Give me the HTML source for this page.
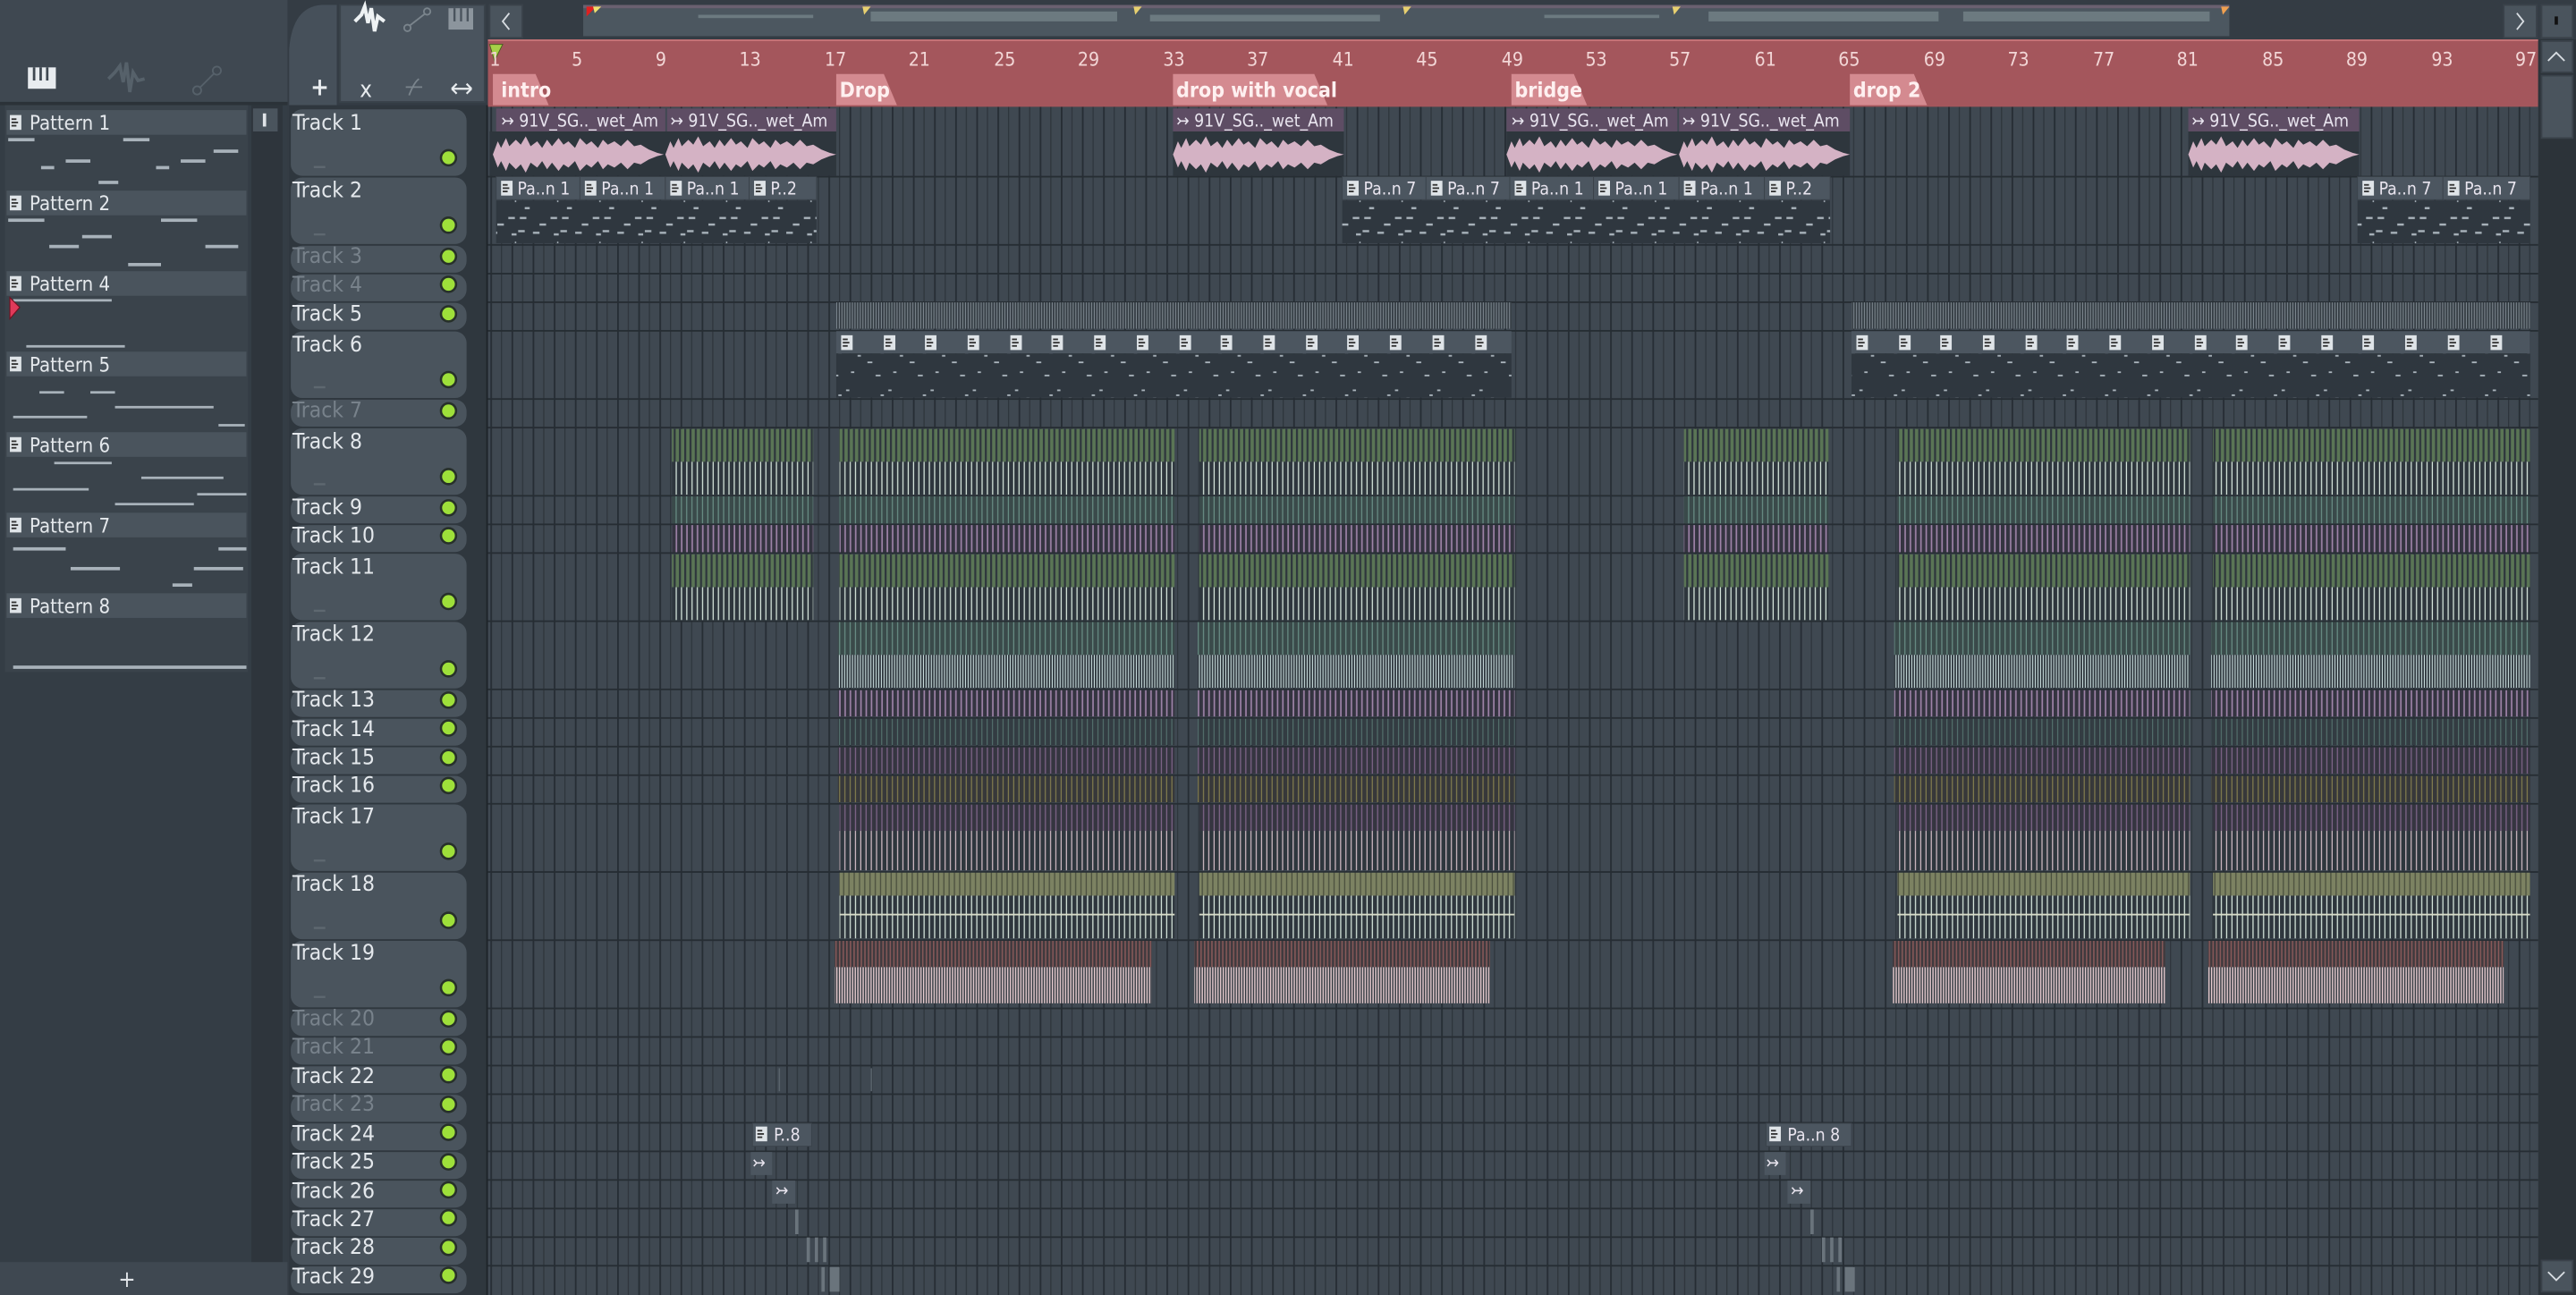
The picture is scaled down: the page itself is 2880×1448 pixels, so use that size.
<!DOCTYPE html>
<html><head><meta charset="utf-8"><style>
html,body{margin:0;padding:0;background:#343c44;overflow:hidden}
svg{display:block}
text{font-family:"DejaVu Sans Condensed","Liberation Sans Narrow","Liberation Sans",sans-serif}
.tl{font-size:13.3px;fill:#e4e8ec}
.td{font-size:13.3px;fill:#78828b}
.pl{font-size:12px;fill:#e4e8ec}
.cl{font-size:10.5px;fill:#e8e4ee}
.rn{font-size:11.5px;fill:#f2d6d6}
.mk{font-size:12.5px;fill:#fff0f0;font-weight:bold}
</style></head><body>
<svg width="2880" height="1448" viewBox="0 0 1568 788" preserveAspectRatio="none" xmlns="http://www.w3.org/2000/svg">
<defs>
<pattern id="grid" x="298.5" y="0" width="12.86" height="10" patternUnits="userSpaceOnUse">
<rect width="12.86" height="10" fill="#3f4851"/>
<rect x="0" width="1" height="10" fill="#262d34"/>
<rect x="6.43" width="0.7" height="10" fill="#2e353c"/>
</pattern>
<pattern id="grn" x="0" y="0" width="3.21" height="10" patternUnits="userSpaceOnUse"><rect width="3.21" height="10" fill="#2e363d"/><rect x="0.4" width="2" height="10" fill="#5a7555"/></pattern>
<pattern id="wsp" x="0" y="0" width="3.21" height="10" patternUnits="userSpaceOnUse"><rect width="3.21" height="10" fill="#2e363d"/><rect x="0.4" width="0.7" height="10" fill="#d6e6dc"/></pattern>
<pattern id="tea" x="0" y="0" width="3.21" height="10" patternUnits="userSpaceOnUse"><rect width="3.21" height="10" fill="#3a4a4a"/><rect x="0.4" width="0.6" height="10" fill="#6e968c"/></pattern>
<pattern id="pur" x="0" y="0" width="3.21" height="10" patternUnits="userSpaceOnUse"><rect width="3.21" height="10" fill="#343440"/><rect x="0.4" width="0.9" height="10" fill="#a084aa"/></pattern>
<pattern id="wdn" x="0" y="0" width="1.6" height="10" patternUnits="userSpaceOnUse"><rect width="1.6" height="10" fill="#2e363d"/><rect x="0.2" width="0.6" height="10" fill="#c8dcdc"/></pattern>
<pattern id="tth" x="0" y="0" width="3.21" height="10" patternUnits="userSpaceOnUse"><rect width="3.21" height="10" fill="#333c42"/><rect x="0.4" width="0.5" height="10" fill="#5c7e78"/></pattern>
<pattern id="pth" x="0" y="0" width="3.21" height="10" patternUnits="userSpaceOnUse"><rect width="3.21" height="10" fill="#353540"/><rect x="0.4" width="0.7" height="10" fill="#7e6488"/></pattern>
<pattern id="olv" x="0" y="0" width="3.21" height="10" patternUnits="userSpaceOnUse"><rect width="3.21" height="10" fill="#37383a"/><rect x="0.4" width="0.6" height="10" fill="#8a8450"/></pattern>
<pattern id="ol2" x="0" y="0" width="3.21" height="10" patternUnits="userSpaceOnUse"><rect width="3.21" height="10" fill="#4a4f3e"/><rect x="0.3" width="2.5" height="10" fill="#7c8262"/></pattern>
<pattern id="pkl" x="0" y="0" width="3.21" height="10" patternUnits="userSpaceOnUse"><rect width="3.21" height="10" fill="#2e363d"/><rect x="0.4" width="0.6" height="10" fill="#e6ccd6"/></pattern>
<pattern id="red" x="0" y="0" width="2.2" height="10" patternUnits="userSpaceOnUse"><rect width="2.2" height="10" fill="#3f3a3e"/><rect x="0.3" width="0.8" height="10" fill="#8a5a5a"/></pattern>
<pattern id="pnk" x="0" y="0" width="1.6" height="10" patternUnits="userSpaceOnUse"><rect width="1.6" height="10" fill="#2e363d"/><rect x="0.2" width="0.8" height="10" fill="#e8ccd0"/></pattern>
<pattern id="gry" x="0" y="0" width="1.6" height="10" patternUnits="userSpaceOnUse"><rect width="1.6" height="10" fill="#343c43"/><rect x="0.2" width="0.5" height="10" fill="#8c969e"/></pattern>
<pattern id="dots" x="0" y="0" width="25.7" height="26" patternUnits="userSpaceOnUse">
<rect width="25.7" height="26" fill="#2f373f"/>
<rect x="1" y="2" width="4" height="1.3" fill="#aab4bc"/><rect x="8" y="2" width="4" height="1.3" fill="#aab4bc"/><rect x="20" y="6" width="4" height="1.3" fill="#aab4bc"/>
<rect x="3" y="12" width="3" height="1.3" fill="#aab4bc"/><rect x="7" y="10" width="4" height="1.3" fill="#aab4bc"/><rect x="16" y="11" width="4" height="1.3" fill="#aab4bc"/>
<rect x="5" y="17" width="0.8" height="2" fill="#aab4bc"/><rect x="11" y="22" width="3" height="1.3" fill="#aab4bc"/></pattern>
<pattern id="dots2" x="0" y="0" width="25.7" height="26" patternUnits="userSpaceOnUse">
<rect width="25.7" height="26" fill="#2f373f"/>
<rect x="1" y="3" width="2" height="1" fill="#aab4bc"/><rect x="8" y="8" width="2" height="1" fill="#aab4bc"/><rect x="14" y="12" width="3" height="1" fill="#aab4bc"/><rect x="4" y="18" width="2" height="1" fill="#aab4bc"/><rect x="19" y="20" width="3" height="1" fill="#aab4bc"/><rect x="22" y="6" width="2" height="1" fill="#aab4bc"/></pattern>
<g id="pic"><rect width="7" height="9" fill="#dfe4e8"/><rect x="1" y="2" width="3" height="1" fill="#333"/><rect x="1" y="4" width="4" height="1" fill="#333"/><rect x="1" y="6" width="3" height="1" fill="#333"/></g>
<polygon id="wv" fill="#d4b2c4" points="0,94 3,86 5,90 8,84 10,89 14,85 17,88 20,83 23,89 27,86 30,90 33,85 36,89 40,84 43,88 46,86 50,90 53,84 57,88 60,86 64,90 67,85 70,88 74,86 78,89 82,85 86,89 90,88 95,91 100,93 104,94 100,95 95,97 90,100 86,99 82,103 78,99 74,102 70,100 67,103 64,98 60,102 57,100 53,104 50,98 46,102 43,100 40,104 36,99 33,103 30,98 27,102 23,99 20,105 17,100 14,103 10,99 8,104 5,98 3,102"/>
</defs>

<rect width="1568" height="788" fill="#343c44"/>
<!-- left panel -->
<rect x="0" y="0" width="175" height="788" fill="#343d45"/>
<rect x="0" y="0" width="175" height="62" fill="#3f4851"/>
<rect x="0" y="62" width="175" height="2" fill="#2b3238"/>
<g fill="#e8ecef"><rect x="17" y="41" width="17" height="13"/></g>
<g fill="#3f4851"><rect x="20" y="41" width="1.5" height="8"/><rect x="24" y="41" width="1.5" height="8"/><rect x="28" y="41" width="1.5" height="8"/></g>
<path d="M66 48 L70 44 L73 40 L75 50 L77 38 L79 56 L81 44 L84 49 L88 48" stroke="#56616a" stroke-width="2" fill="none"/>
<circle cx="120" cy="55" r="2.5" fill="none" stroke="#56616a"/><circle cx="132" cy="43" r="2.5" fill="none" stroke="#56616a"/><path d="M122 53 L130 45" stroke="#56616a"/>
<rect x="153" y="64" width="19" height="704" fill="#2e353c"/>
<rect x="154" y="66" width="15" height="14" fill="#4a545d"/><rect x="160" y="69" width="2" height="8" fill="#e0e4e8"/>
<rect x="3" y="64" width="148" height="345" fill="#3a434b"/>
<g>
<rect x="4" y="67" width="146" height="15" fill="#4a545d"/><use href="#pic" x="6" y="70"/><text class="pl" x="18" y="79">Pattern 1</text>
<rect x="4" y="116" width="146" height="15" fill="#4a545d"/><use href="#pic" x="6" y="119"/><text class="pl" x="18" y="128">Pattern 2</text>
<rect x="4" y="165" width="146" height="15" fill="#4a545d"/><use href="#pic" x="6" y="168"/><text class="pl" x="18" y="177">Pattern 4</text>
<rect x="4" y="214" width="146" height="15" fill="#4a545d"/><use href="#pic" x="6" y="217"/><text class="pl" x="18" y="226">Pattern 5</text>
<rect x="4" y="263" width="146" height="15" fill="#4a545d"/><use href="#pic" x="6" y="266"/><text class="pl" x="18" y="275">Pattern 6</text>
<rect x="4" y="312" width="146" height="15" fill="#4a545d"/><use href="#pic" x="6" y="315"/><text class="pl" x="18" y="324">Pattern 7</text>
<rect x="4" y="361" width="146" height="15" fill="#4a545d"/><use href="#pic" x="6" y="364"/><text class="pl" x="18" y="373">Pattern 8</text>
</g>
<g fill="#a8b2ba">
<rect x="5" y="84" width="16" height="2"/><rect x="75" y="84" width="16" height="2"/><rect x="130" y="91" width="15" height="2"/><rect x="25" y="101" width="8" height="2"/><rect x="40" y="97" width="15" height="2"/><rect x="95" y="101" width="8" height="2"/><rect x="110" y="97" width="15" height="2"/><rect x="60" y="110" width="12" height="2"/>
<rect x="5" y="133" width="22" height="2"/><rect x="98" y="133" width="22" height="2"/><rect x="30" y="149" width="18" height="2"/><rect x="50" y="143" width="18" height="2"/><rect x="125" y="149" width="20" height="2"/><rect x="78" y="160" width="20" height="2"/>
<rect x="8" y="182" width="60" height="1.5"/><rect x="16" y="210" width="60" height="1.5"/>
<rect x="24" y="238" width="15" height="1.5"/><rect x="55" y="238" width="15" height="1.5"/><rect x="70" y="247" width="60" height="1.5"/><rect x="8" y="253" width="45" height="1.5"/><rect x="133" y="258" width="16" height="1.5"/>
<rect x="33" y="281" width="35" height="1.5"/><rect x="86" y="290" width="50" height="1.5"/><rect x="8" y="297" width="46" height="1.5"/><rect x="70" y="306" width="48" height="1.5"/><rect x="120" y="300" width="30" height="1.5"/>
<rect x="8" y="333" width="32" height="2"/><rect x="133" y="333" width="17" height="2"/><rect x="43" y="345" width="30" height="2"/><rect x="118" y="345" width="30" height="2"/><rect x="105" y="355" width="12" height="2"/>
<rect x="8" y="405" width="142" height="2"/>
</g>
<path d="M6 181 L12 187 L6 194 Z" fill="#e03a5a" stroke="#701020" stroke-width="0.6"/>
<rect x="0" y="768" width="175" height="20" fill="#3f4851"/>
<text x="72" y="783" font-size="14" fill="#e0e4e8" font-family="Liberation Sans">+</text>

<!-- tool column -->
<path d="M176 64 L176 30 Q178 4 196 3 L205 3 L205 64 Z" fill="#46505a"/>
<rect x="207" y="3" width="88" height="59" fill="#4a545e" stroke="#3a434b"/>
<text x="189" y="58" font-size="15" fill="#e8ecef" font-family="Liberation Sans" font-weight="bold">+</text>
<path d="M216 13 L220 9 L222 4 L224 14 L226 5 L228 19 L230 10 L234 13" stroke="#eef2f4" stroke-width="2.2" fill="none"/>
<circle cx="248" cy="17" r="2" fill="none" stroke="#7a848c"/><circle cx="260" cy="7" r="2" fill="none" stroke="#7a848c"/><path d="M249.5 15.5 L258.5 8.5" stroke="#7a848c"/>
<rect x="273" y="5" width="15" height="13" fill="#8c959d"/><rect x="276" y="5" width="1.3" height="8" fill="#4a545e"/><rect x="280" y="5" width="1.3" height="8" fill="#4a545e"/><rect x="284" y="5" width="1.3" height="8" fill="#4a545e"/>
<text x="219" y="59" font-size="14" fill="#e8ecef" font-family="Liberation Sans">x</text>
<path d="M249 58 Q252 50 255 48 M247 53 L257 53" stroke="#7a848c" fill="none"/>
<path d="M275 54 L287 54 M275 54 L278 51 M275 54 L278 57 M287 54 L284 51 M287 54 L284 57" stroke="#e8ecef" fill="none" stroke-width="1.2"/>

<!-- top bar -->
<rect x="297" y="0" width="1271" height="25" fill="#343c44"/>
<rect x="298" y="3" width="20" height="20" fill="#4a545d" stroke="#3a424a"/>
<path d="M310 8 L306 13 L310 18" stroke="#d8dde2" fill="none"/>
<rect x="355" y="4" width="1002" height="18" fill="#4c5760"/>
<rect x="355" y="3" width="1002" height="2" fill="#6a6070"/>
<path d="M357 4 L363 4 L357 10Z" fill="#e02020"/><path d="M361 4 L366 4 L362 8Z" fill="#f0e070"/>
<g fill="#e8d070"><path d="M525 4 L530 4 L526 9Z"/><path d="M690 4 L695 4 L691 9Z"/><path d="M854 4 L859 4 L855 9Z"/><path d="M1018 4 L1023 4 L1019 9Z"/><path d="M1352 4 L1357 4 L1353 9Z" fill="#f0a050"/></g>
<g fill="#6c7a80"><rect x="425" y="9" width="70" height="2"/><rect x="530" y="7" width="150" height="6"/><rect x="700" y="9" width="140" height="4"/><rect x="940" y="9" width="70" height="2"/><rect x="1040" y="7" width="140" height="6"/><rect x="1195" y="7" width="150" height="6"/></g>
<rect x="1524" y="3" width="20" height="20" fill="#4a545d" stroke="#3a424a"/>
<path d="M1532 8 L1536 13 L1532 18" stroke="#d8dde2" fill="none"/>
<rect x="1547" y="3" width="19" height="20" fill="#4a545d" stroke="#3a424a"/><rect x="1555" y="10" width="2" height="5" fill="#111"/>

<!-- ruler -->
<rect x="297" y="24" width="1248" height="41" fill="#a4565c"/>
<rect x="297" y="24" width="1248" height="1" fill="#c77478"/>
<path d="M298 27 L306 27 L301 37 Z" fill="#a6d048" stroke="#4a6020" stroke-width="0.5"/>
<g>
<text class="rn" x="298" y="40">1</text><text class="rn" x="348" y="40">5</text><text class="rn" x="399" y="40">9</text><text class="rn" x="450" y="40">13</text><text class="rn" x="502" y="40">17</text><text class="rn" x="553" y="40">21</text><text class="rn" x="605" y="40">25</text><text class="rn" x="656" y="40">29</text><text class="rn" x="708" y="40">33</text><text class="rn" x="759" y="40">37</text><text class="rn" x="811" y="40">41</text><text class="rn" x="862" y="40">45</text><text class="rn" x="914" y="40">49</text><text class="rn" x="965" y="40">53</text><text class="rn" x="1016" y="40">57</text><text class="rn" x="1068" y="40">61</text><text class="rn" x="1119" y="40">65</text><text class="rn" x="1171" y="40">69</text><text class="rn" x="1222" y="40">73</text><text class="rn" x="1274" y="40">77</text><text class="rn" x="1325" y="40">81</text><text class="rn" x="1377" y="40">85</text><text class="rn" x="1428" y="40">89</text><text class="rn" x="1480" y="40">93</text><text class="rn" x="1531" y="40">97</text>
</g>
<g fill="#d48a90">
<path d="M300 45 L326 45 L334 64 L300 64Z"/><path d="M509 45 L538 45 L546 64 L509 64Z"/><path d="M714 45 L800 45 L808 64 L714 64Z"/><path d="M920 45 L958 45 L966 64 L920 64Z"/><path d="M1126 45 L1165 45 L1173 64 L1126 64Z"/>
</g>
<text class="mk" x="305" y="59">intro</text><text class="mk" x="511" y="59">Drop</text><text class="mk" x="716" y="59">drop with vocal</text><text class="mk" x="922" y="59">bridge</text><text class="mk" x="1128" y="59">drop 2</text>

<!-- right scrollbar -->
<rect x="1545" y="24" width="23" height="764" fill="#2c3339"/>
<rect x="1547" y="25" width="19" height="19" fill="#4a545d" stroke="#3a424a"/><path d="M1551 37 L1556 32 L1561 37" stroke="#d8dde2" fill="none"/>
<rect x="1547" y="46" width="19" height="38" fill="#4a545d" stroke="#3a424a"/>
<rect x="1547" y="767" width="19" height="19" fill="#4a545d" stroke="#3a424a"/><path d="M1551 774 L1556 779 L1561 774" stroke="#d8dde2" fill="none"/>

<!-- grid -->
<rect x="297" y="65" width="1248" height="723" fill="url(#grid)"/>
<rect x="286" y="64" width="11" height="724" fill="#2f373e"/>
<rect x="296" y="64" width="1" height="724" fill="#1e2429"/>
<g fill="#262d33">
<rect x="297" y="107" width="1248" height="1"/><rect x="297" y="148.5" width="1248" height="1"/><rect x="297" y="166" width="1248" height="1"/><rect x="297" y="183.4" width="1248" height="1"/><rect x="297" y="200.8" width="1248" height="1"/><rect x="297" y="242.3" width="1248" height="1"/><rect x="297" y="259.7" width="1248" height="1"/><rect x="297" y="301.2" width="1248" height="1"/><rect x="297" y="318.6" width="1248" height="1"/><rect x="297" y="336" width="1248" height="1"/><rect x="297" y="377.5" width="1248" height="1"/><rect x="297" y="419" width="1248" height="1"/><rect x="297" y="436.4" width="1248" height="1"/><rect x="297" y="453.8" width="1248" height="1"/><rect x="297" y="471.2" width="1248" height="1"/><rect x="297" y="488.6" width="1248" height="1"/><rect x="297" y="530.1" width="1248" height="1"/><rect x="297" y="571.6" width="1248" height="1"/><rect x="297" y="613.1" width="1248" height="1"/><rect x="297" y="630.5" width="1248" height="1"/><rect x="297" y="647.9" width="1248" height="1"/><rect x="297" y="665.3" width="1248" height="1"/><rect x="297" y="682.7" width="1248" height="1"/><rect x="297" y="700.1" width="1248" height="1"/><rect x="297" y="717.5" width="1248" height="1"/><rect x="297" y="734.9" width="1248" height="1"/><rect x="297" y="752.3" width="1248" height="1"/><rect x="297" y="769.7" width="1248" height="1"/>
</g>

<!-- track headers -->
<rect x="176" y="64" width="110" height="724" fill="#2f373e"/>
<g fill="#4a545d">
<rect x="177" y="66.5" width="107" height="40.5" rx="7"/><rect x="177" y="108" width="107" height="40.5" rx="7"/><rect x="177" y="149.5" width="107" height="16.4" rx="7"/><rect x="177" y="166.9" width="107" height="16.4" rx="7"/><rect x="177" y="184.3" width="107" height="16.4" rx="7"/><rect x="177" y="201.7" width="107" height="40.5" rx="7"/><rect x="177" y="243.2" width="107" height="16.4" rx="7"/><rect x="177" y="260.6" width="107" height="40.5" rx="7"/><rect x="177" y="302.1" width="107" height="16.4" rx="7"/><rect x="177" y="319.5" width="107" height="16.4" rx="7"/><rect x="177" y="336.9" width="107" height="40.5" rx="7"/><rect x="177" y="378.4" width="107" height="40.5" rx="7"/><rect x="177" y="419.9" width="107" height="16.4" rx="7"/><rect x="177" y="437.3" width="107" height="16.4" rx="7"/><rect x="177" y="454.7" width="107" height="16.4" rx="7"/><rect x="177" y="472.1" width="107" height="16.4" rx="7"/><rect x="177" y="489.5" width="107" height="40.5" rx="7"/><rect x="177" y="531" width="107" height="40.5" rx="7"/><rect x="177" y="572.5" width="107" height="40.5" rx="7"/><rect x="177" y="614" width="107" height="16.4" rx="7"/><rect x="177" y="631.4" width="107" height="16.4" rx="7"/><rect x="177" y="648.8" width="107" height="16.4" rx="7"/><rect x="177" y="666.2" width="107" height="16.4" rx="7"/><rect x="177" y="683.6" width="107" height="16.4" rx="7"/><rect x="177" y="701" width="107" height="16.4" rx="7"/><rect x="177" y="718.4" width="107" height="16.4" rx="7"/><rect x="177" y="735.8" width="107" height="16.4" rx="7"/><rect x="177" y="753.2" width="107" height="16.4" rx="7"/><rect x="177" y="770.6" width="107" height="16.4" rx="7"/>
</g>
<text class="tl" x="178" y="79">Track 1</text><text class="tl" x="178" y="120">Track 2</text><text class="td" x="178" y="160">Track 3</text><text class="td" x="178" y="177.5">Track 4</text><text class="tl" x="178" y="195">Track 5</text><text class="tl" x="178" y="214">Track 6</text><text class="td" x="178" y="254">Track 7</text><text class="tl" x="178" y="273">Track 8</text><text class="tl" x="178" y="313">Track 9</text><text class="tl" x="178" y="330">Track 10</text><text class="tl" x="178" y="349">Track 11</text><text class="tl" x="178" y="390">Track 12</text><text class="tl" x="178" y="430">Track 13</text><text class="tl" x="178" y="448">Track 14</text><text class="tl" x="178" y="465">Track 15</text><text class="tl" x="178" y="482">Track 16</text><text class="tl" x="178" y="501">Track 17</text><text class="tl" x="178" y="542">Track 18</text><text class="tl" x="178" y="584">Track 19</text><text class="td" x="178" y="624">Track 20</text><text class="td" x="178" y="641">Track 21</text><text class="tl" x="178" y="659">Track 22</text><text class="td" x="178" y="676">Track 23</text><text class="tl" x="178" y="694">Track 24</text><text class="tl" x="178" y="711">Track 25</text><text class="tl" x="178" y="729">Track 26</text><text class="tl" x="178" y="746">Track 27</text><text class="tl" x="178" y="763">Track 28</text><text class="tl" x="178" y="781">Track 29</text>
<g fill="#5e6870"><rect x="191" y="101" width="7" height="1.3"/><rect x="191" y="142" width="7" height="1.3"/><rect x="191" y="235" width="7" height="1.3"/><rect x="191" y="294" width="7" height="1.3"/><rect x="191" y="371" width="7" height="1.3"/><rect x="191" y="412" width="7" height="1.3"/><rect x="191" y="523" width="7" height="1.3"/><rect x="191" y="564" width="7" height="1.3"/><rect x="191" y="606" width="7" height="1.3"/></g>
<g fill="#9ee03a" stroke="#27302a" stroke-width="1.4">
<circle cx="273" cy="96" r="4.6"/><circle cx="273" cy="137" r="4.6"/><circle cx="273" cy="156" r="4.6"/><circle cx="273" cy="173" r="4.6"/><circle cx="273" cy="191" r="4.6"/><circle cx="273" cy="231" r="4.6"/><circle cx="273" cy="250" r="4.6"/><circle cx="273" cy="290" r="4.6"/><circle cx="273" cy="309" r="4.6"/><circle cx="273" cy="326" r="4.6"/><circle cx="273" cy="366" r="4.6"/><circle cx="273" cy="407" r="4.6"/><circle cx="273" cy="426" r="4.6"/><circle cx="273" cy="443" r="4.6"/><circle cx="273" cy="461" r="4.6"/><circle cx="273" cy="478" r="4.6"/><circle cx="273" cy="518" r="4.6"/><circle cx="273" cy="560" r="4.6"/><circle cx="273" cy="601" r="4.6"/><circle cx="273" cy="620" r="4.6"/><circle cx="273" cy="637" r="4.6"/><circle cx="273" cy="654" r="4.6"/><circle cx="273" cy="672" r="4.6"/><circle cx="273" cy="689" r="4.6"/><circle cx="273" cy="707" r="4.6"/><circle cx="273" cy="724" r="4.6"/><circle cx="273" cy="741" r="4.6"/><circle cx="273" cy="759" r="4.6"/><circle cx="273" cy="776" r="4.6"/>
</g>

<!-- Track 1 audio -->
<g>
<g fill="#2e363d"><rect x="298" y="80" width="211" height="27"/><rect x="714" y="80" width="104" height="27"/><rect x="917" y="80" width="209" height="27"/><rect x="1332" y="80" width="104" height="27"/></g>
<rect x="302" y="66" width="103" height="14" fill="#5e4d64"/><rect x="406" y="66" width="103" height="14" fill="#5e4d64"/>
<rect x="714" y="66" width="104" height="14" fill="#5e4d64"/><rect x="917" y="66" width="104" height="14" fill="#5e4d64"/><rect x="1022" y="66" width="104" height="14" fill="#5e4d64"/><rect x="1332" y="66" width="104" height="14" fill="#5e4d64"/>
<use href="#wv" x="300"/><use href="#wv" x="405"/><use href="#wv" x="714"/><use href="#wv" x="917"/><use href="#wv" x="1022"/><use href="#wv" x="1332"/>
<text class="cl" x="305" y="77">↣ 91V_SG.._wet_Am</text><text class="cl" x="408" y="77">↣ 91V_SG.._wet_Am</text><text class="cl" x="716" y="77">↣ 91V_SG.._wet_Am</text><text class="cl" x="920" y="77">↣ 91V_SG.._wet_Am</text><text class="cl" x="1024" y="77">↣ 91V_SG.._wet_Am</text><text class="cl" x="1334" y="77">↣ 91V_SG.._wet_Am</text>
</g>

<!-- Track 2 patterns -->
<g>
<rect x="302" y="122" width="195" height="26" fill="url(#dots)"/><rect x="817" y="122" width="297" height="26" fill="url(#dots)"/><rect x="1435" y="122" width="105" height="26" fill="url(#dots)"/>
<g fill="#4c5660" stroke="#3a424a" stroke-width="0.5">
<rect x="302" y="107.5" width="51" height="14"/><rect x="353" y="107.5" width="52" height="14"/><rect x="405" y="107.5" width="51" height="14"/><rect x="456" y="107.5" width="41" height="14"/>
<rect x="817" y="107.5" width="51" height="14"/><rect x="868" y="107.5" width="51" height="14"/><rect x="919" y="107.5" width="51" height="14"/><rect x="970" y="107.5" width="52" height="14"/><rect x="1022" y="107.5" width="52" height="14"/><rect x="1074" y="107.5" width="40" height="14"/>
<rect x="1435" y="107.5" width="52" height="14"/><rect x="1487" y="107.5" width="53" height="14"/>
</g>
<use href="#pic" x="305" y="110"/><use href="#pic" x="356" y="110"/><use href="#pic" x="408" y="110"/><use href="#pic" x="459" y="110"/><use href="#pic" x="820" y="110"/><use href="#pic" x="871" y="110"/><use href="#pic" x="922" y="110"/><use href="#pic" x="973" y="110"/><use href="#pic" x="1025" y="110"/><use href="#pic" x="1077" y="110"/><use href="#pic" x="1438" y="110"/><use href="#pic" x="1490" y="110"/>
<text class="cl" x="315" y="118.5">Pa..n 1</text><text class="cl" x="366" y="118.5">Pa..n 1</text><text class="cl" x="418" y="118.5">Pa..n 1</text><text class="cl" x="469" y="118.5">P..2</text>
<text class="cl" x="830" y="118.5">Pa..n 7</text><text class="cl" x="881" y="118.5">Pa..n 7</text><text class="cl" x="932" y="118.5">Pa..n 1</text><text class="cl" x="983" y="118.5">Pa..n 1</text><text class="cl" x="1035" y="118.5">Pa..n 1</text><text class="cl" x="1087" y="118.5">P..2</text>
<text class="cl" x="1448" y="118.5">Pa..n 7</text><text class="cl" x="1500" y="118.5">Pa..n 7</text>
</g>

<rect x="509" y="184" width="411" height="16" fill="url(#gry)"/><rect x="1127" y="184" width="413" height="16" fill="url(#gry)"/>
<rect x="509" y="215" width="411" height="27" fill="url(#dots2)"/><rect x="1127" y="215" width="413" height="27" fill="url(#dots2)"/>
<rect x="509" y="201.5" width="411" height="13.5" fill="#4c5660"/><rect x="1127" y="201.5" width="413" height="13.5" fill="#4c5660"/>
<g>
<use href="#pic" x="512" y="204"/><use href="#pic" x="538" y="204"/><use href="#pic" x="563" y="204"/><use href="#pic" x="589" y="204"/><use href="#pic" x="615" y="204"/><use href="#pic" x="640" y="204"/><use href="#pic" x="666" y="204"/><use href="#pic" x="692" y="204"/><use href="#pic" x="718" y="204"/><use href="#pic" x="743" y="204"/><use href="#pic" x="769" y="204"/><use href="#pic" x="795" y="204"/><use href="#pic" x="820" y="204"/><use href="#pic" x="846" y="204"/><use href="#pic" x="872" y="204"/><use href="#pic" x="898" y="204"/>
<use href="#pic" x="1130" y="204"/><use href="#pic" x="1156" y="204"/><use href="#pic" x="1181" y="204"/><use href="#pic" x="1207" y="204"/><use href="#pic" x="1233" y="204"/><use href="#pic" x="1258" y="204"/><use href="#pic" x="1284" y="204"/><use href="#pic" x="1310" y="204"/><use href="#pic" x="1336" y="204"/><use href="#pic" x="1361" y="204"/><use href="#pic" x="1387" y="204"/><use href="#pic" x="1413" y="204"/><use href="#pic" x="1438" y="204"/><use href="#pic" x="1464" y="204"/><use href="#pic" x="1490" y="204"/><use href="#pic" x="1516" y="204"/>
</g>

<g id="t8">
<rect x="409" y="261" width="86" height="20" fill="url(#grn)"/><rect x="511" y="261" width="204" height="20" fill="url(#grn)"/><rect x="730" y="261" width="192" height="20" fill="url(#grn)"/><rect x="1025" y="261" width="88" height="20" fill="url(#grn)"/><rect x="1155" y="261" width="178" height="20" fill="url(#grn)"/><rect x="1347" y="261" width="193" height="20" fill="url(#grn)"/>
<rect x="409" y="281" width="86" height="20" fill="url(#wsp)"/><rect x="511" y="281" width="204" height="20" fill="url(#wsp)"/><rect x="730" y="281" width="192" height="20" fill="url(#wsp)"/><rect x="1025" y="281" width="88" height="20" fill="url(#wsp)"/><rect x="1155" y="281" width="178" height="20" fill="url(#wsp)"/><rect x="1347" y="281" width="193" height="20" fill="url(#wsp)"/>
</g>
<g>
<rect x="409" y="302" width="86" height="16.5" fill="url(#tea)"/><rect x="511" y="302" width="204" height="16.5" fill="url(#tea)"/><rect x="730" y="302" width="192" height="16.5" fill="url(#tea)"/><rect x="1025" y="302" width="88" height="16.5" fill="url(#tea)"/><rect x="1155" y="302" width="178" height="16.5" fill="url(#tea)"/><rect x="1347" y="302" width="193" height="16.5" fill="url(#tea)"/>
<rect x="409" y="319.5" width="86" height="16.5" fill="url(#pur)"/><rect x="511" y="319.5" width="204" height="16.5" fill="url(#pur)"/><rect x="730" y="319.5" width="192" height="16.5" fill="url(#pur)"/><rect x="1025" y="319.5" width="88" height="16.5" fill="url(#pur)"/><rect x="1155" y="319.5" width="178" height="16.5" fill="url(#pur)"/><rect x="1347" y="319.5" width="193" height="16.5" fill="url(#pur)"/>
</g>
<use href="#t8" y="76.3"/>

<g>
<rect x="510" y="378.5" width="205" height="20" fill="url(#tea)"/><rect x="729" y="378.5" width="193" height="20" fill="url(#tea)"/><rect x="1153" y="378.5" width="180" height="20" fill="url(#tea)"/><rect x="1346" y="378.5" width="194" height="20" fill="url(#tea)"/>
<rect x="510" y="398.5" width="205" height="20" fill="url(#wdn)"/><rect x="729" y="398.5" width="193" height="20" fill="url(#wdn)"/><rect x="1153" y="398.5" width="180" height="20" fill="url(#wdn)"/><rect x="1346" y="398.5" width="194" height="20" fill="url(#wdn)"/>
</g>
<g>
<rect x="510" y="420" width="205" height="16" fill="url(#pur)"/><rect x="729" y="420" width="193" height="16" fill="url(#pur)"/><rect x="1153" y="420" width="180" height="16" fill="url(#pur)"/><rect x="1346" y="420" width="194" height="16" fill="url(#pur)"/>
<rect x="510" y="437.4" width="205" height="16" fill="url(#tth)"/><rect x="729" y="437.4" width="193" height="16" fill="url(#tth)"/><rect x="1153" y="437.4" width="180" height="16" fill="url(#tth)"/><rect x="1346" y="437.4" width="194" height="16" fill="url(#tth)"/>
<rect x="510" y="454.8" width="205" height="16" fill="url(#pth)"/><rect x="729" y="454.8" width="193" height="16" fill="url(#pth)"/><rect x="1153" y="454.8" width="180" height="16" fill="url(#pth)"/><rect x="1346" y="454.8" width="194" height="16" fill="url(#pth)"/>
<rect x="510" y="472.2" width="205" height="16" fill="url(#olv)"/><rect x="729" y="472.2" width="193" height="16" fill="url(#olv)"/><rect x="1153" y="472.2" width="180" height="16" fill="url(#olv)"/><rect x="1346" y="472.2" width="194" height="16" fill="url(#olv)"/>
</g>
<g>
<rect x="511" y="489.6" width="204" height="16" fill="url(#pth)"/><rect x="730" y="489.6" width="192" height="16" fill="url(#pth)"/><rect x="1155" y="489.6" width="178" height="16" fill="url(#pth)"/><rect x="1347" y="489.6" width="193" height="16" fill="url(#pth)"/>
<rect x="511" y="505.6" width="204" height="24" fill="url(#pkl)"/><rect x="730" y="505.6" width="192" height="24" fill="url(#pkl)"/><rect x="1155" y="505.6" width="178" height="24" fill="url(#pkl)"/><rect x="1347" y="505.6" width="193" height="24" fill="url(#pkl)"/>
</g>
<g>
<rect x="511" y="531" width="204" height="14" fill="url(#ol2)"/><rect x="730" y="531" width="192" height="14" fill="url(#ol2)"/><rect x="1155" y="531" width="178" height="14" fill="url(#ol2)"/><rect x="1347" y="531" width="193" height="14" fill="url(#ol2)"/>
<rect x="511" y="545" width="204" height="26" fill="url(#wsp)"/><rect x="730" y="545" width="192" height="26" fill="url(#wsp)"/><rect x="1155" y="545" width="178" height="26" fill="url(#wsp)"/><rect x="1347" y="545" width="193" height="26" fill="url(#wsp)"/>
<g fill="#d8dcc8"><rect x="511" y="556" width="204" height="1"/><rect x="730" y="556" width="192" height="1"/><rect x="1155" y="556" width="178" height="1"/><rect x="1347" y="556" width="193" height="1"/></g>
</g>
<g>
<rect x="508" y="572.5" width="193" height="16" fill="url(#red)"/><rect x="727" y="572.5" width="180" height="16" fill="url(#red)"/><rect x="1152" y="572.5" width="166" height="16" fill="url(#red)"/><rect x="1344" y="572.5" width="180" height="16" fill="url(#red)"/>
<rect x="508" y="588.5" width="193" height="22" fill="url(#pnk)"/><rect x="727" y="588.5" width="180" height="22" fill="url(#pnk)"/><rect x="1152" y="588.5" width="166" height="22" fill="url(#pnk)"/><rect x="1344" y="588.5" width="180" height="22" fill="url(#pnk)"/>
</g>
<rect x="474" y="650" width="0.8" height="14" fill="#5a646c"/><rect x="530" y="650" width="0.8" height="14" fill="#5a646c"/>
<g>
<rect x="458" y="683.5" width="36" height="14" fill="#4c5660" stroke="#3a424a" stroke-width="0.5"/><use href="#pic" x="460" y="685.5"/><text class="cl" x="471" y="694">P..8</text>
<rect x="1075" y="683.5" width="52" height="14" fill="#4c5660" stroke="#3a424a" stroke-width="0.5"/><use href="#pic" x="1077" y="685.5"/><text class="cl" x="1088" y="694">Pa..n 8</text>
<rect x="457" y="701" width="13" height="14" fill="#4c5660"/><text class="cl" x="458" y="711">↣</text>
<rect x="470" y="718.4" width="14" height="14" fill="#4c5660"/><text class="cl" x="472" y="728">↣</text>
<rect x="1074" y="701" width="13" height="14" fill="#4c5660"/><text class="cl" x="1075" y="711">↣</text>
<rect x="1088" y="718.4" width="14" height="14" fill="#4c5660"/><text class="cl" x="1090" y="728">↣</text>
<g fill="#6a747c"><rect x="484" y="736" width="2" height="15"/><rect x="491" y="753" width="2" height="15"/><rect x="496" y="753" width="2" height="15"/><rect x="501" y="753" width="2" height="15"/><rect x="500" y="771" width="2" height="15"/><rect x="505" y="771" width="6" height="15"/>
<rect x="1102" y="736" width="2" height="15"/><rect x="1109" y="753" width="2" height="15"/><rect x="1114" y="753" width="2" height="15"/><rect x="1119" y="753" width="2" height="15"/><rect x="1118" y="771" width="2" height="15"/><rect x="1123" y="771" width="6" height="15"/></g>
</g>
</svg>
</body></html>
